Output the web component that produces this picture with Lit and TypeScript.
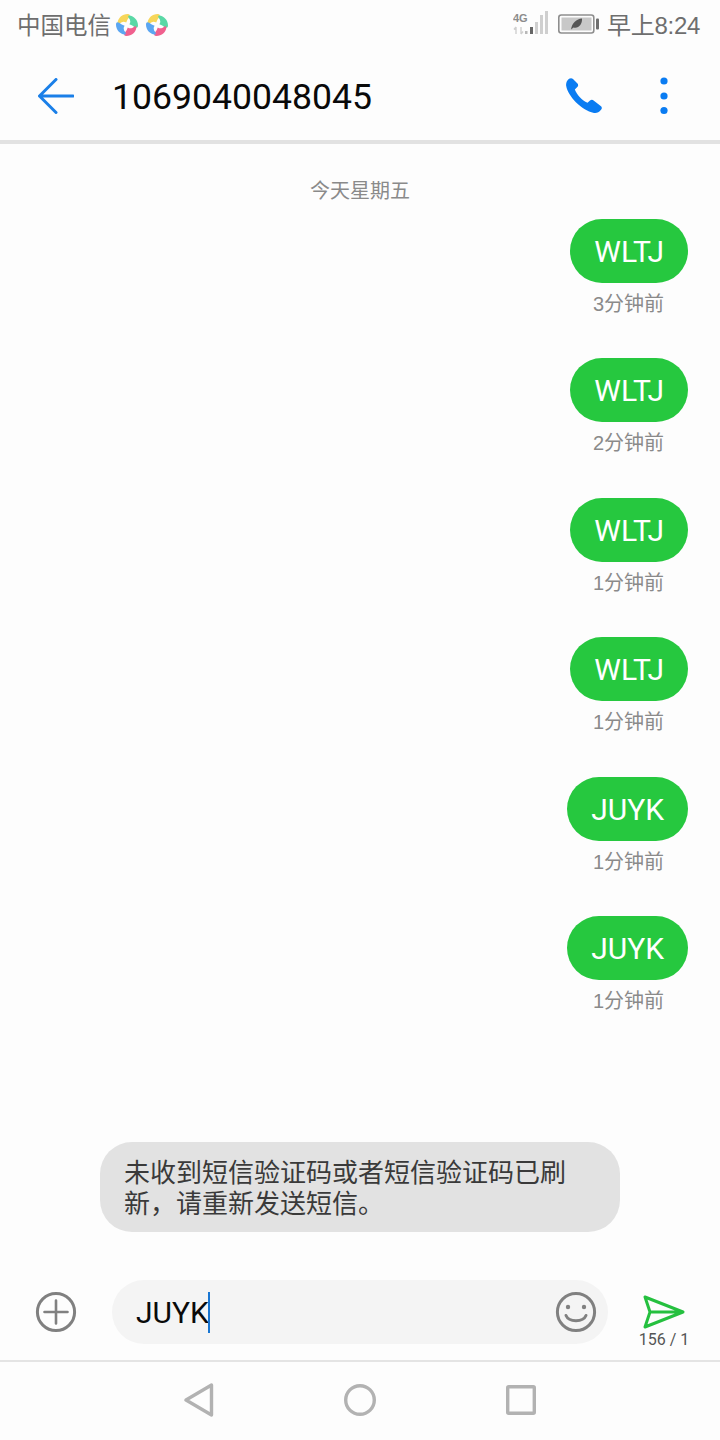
import { LitElement, html, css, svg } from "lit";
import { customElement } from "lit/decorators.js";

const msgs = [
  ["WLTJ", "3分钟前"],
  ["WLTJ", "2分钟前"],
  ["WLTJ", "1分钟前"],
  ["WLTJ", "1分钟前"],
  ["JUYK", "1分钟前"],
  ["JUYK", "1分钟前"],
];

const petal = "M2.6 9.8 C3 5 7.2 1 12.6 1 C15 1 15.4 2.8 14.2 4.2 C12.8 5.8 11.8 7.6 11.2 9.6 C9.4 8.2 7 8.4 5 10.2 C3.8 11.2 2.5 11 2.6 9.8Z";
const appIcon = svg`<svg class="appicon" width="24" height="24" viewBox="0 0 24 24">
  <path d=${petal} fill="#f7d65a"/>
  <path d=${petal} fill="#5ad8a6" transform="rotate(90 12 12)"/>
  <path d=${petal} fill="#f0608e" transform="rotate(180 12 12)"/>
  <path d=${petal} fill="#5ba6f2" transform="rotate(270 12 12)"/>
</svg>`;

@customElement("app-root")
export class AppRoot extends LitElement {
  static styles = css`
    :host {
      display: block;
      width: 720px;
      height: 1440px;
      background: #fdfdfd;
      font-family: "Liberation Sans", "Noto Sans CJK SC", sans-serif;
      overflow: hidden;
    }
    .page {
      display: flex;
      flex-direction: column;
      height: 1440px;
    }
    .status {
      height: 50px;
      display: flex;
      align-items: center;
      justify-content: space-between;
      padding: 0 20px 0 17px;
      color: #6e6e6e;
      flex: none;
    }
    .status-left, .status-right {
      display: flex;
      align-items: center;
    }
    .appicon { margin-left: 6px; }
    .carrier { font-size: 23.5px; margin-right: -2px; margin-bottom: 3px; }
    .clock { margin-left: 8px; font-size: 24px; letter-spacing: -0.3px; margin-bottom: 3px; }
    .signal { margin-bottom: 4px; }
    .batt { margin-left: 10px; margin-bottom: 2px; }
    .header {
      height: 88px;
      flex: none;
      display: flex;
      align-items: center;
      padding: 2px 52px 0 38px;
      border-bottom: 4px solid #e2e2e2;
    }
    .number {
      margin-left: 38px;
      padding-top: 2px;
      font-size: 35.6px;
      color: #0a0a0a;
      flex: 1;
      font-family: "Roboto", sans-serif;
    }
    .more { margin-left: 58px; }
    .thread {
      flex: 1;
      display: flex;
      flex-direction: column;
      min-height: 0;
    }
    .date {
      text-align: center;
      font-size: 20px;
      line-height: 24px;
      color: #8a8a8a;
      margin-top: 35px;
      margin-bottom: 16px;
    }
    .msgs {
      display: flex;
      flex-direction: column;
      align-items: flex-end;
      padding-right: 32px;
      gap: 44.4px;
    }
    .msg {
      display: flex;
      flex-direction: column;
      align-items: flex-end;
      height: 95px;
    }
    .bubble {
      height: 64px;
      line-height: 66px;
      border-radius: 32px;
      background: #26c83f;
      color: #fff;
      padding: 0 24px;
      font-size: 30px;
      font-family: "Roboto", sans-serif;
    }
    .time {
      margin-top: 8px;
      margin-right: 24px;
      font-size: 20px;
      line-height: 26px;
      color: #8a8a8a;
      white-space: nowrap;
    }
    .toast-wrap {
      margin-top: auto;
      display: flex;
      justify-content: center;
      margin-bottom: 48px;
    }
    .toast {
      width: 520px;
      height: 90px;
      box-sizing: border-box;
      border-radius: 32px;
      background: #e2e2e2;
      color: #3a3a3a;
      padding: 16px 24px;
      font-size: 26px;
      line-height: 31px;
    }
    .composer {
      flex: none;
      height: 82px;
      display: flex;
      align-items: flex-start;
      padding-left: 35px;
      border-bottom: 2px solid #e4e4e4;
      box-sizing: border-box;
    }
    .plus { margin-top: 11px; margin-right: 35px; flex: none; }
    .field {
      width: 496px;
      height: 64px;
      border-radius: 32px;
      background: #f4f4f4;
      display: flex;
      align-items: center;
      padding: 0 11px 0 24px;
      box-sizing: border-box;
      flex: none;
    }
    .input {
      flex: 1;
      display: flex;
      align-items: center;
      font-size: 30px;
      color: #0a0a0a;
      font-family: "Roboto", sans-serif;
    }
    .caret {
      display: inline-block;
      width: 2px;
      height: 41px;
      margin-left: -1px;
      background: #1976d2;
    }
    .send {
      flex: none;
      margin-left: 31px;
      width: 50px;
      display: flex;
      flex-direction: column;
      align-items: center;
    }
    .send svg { margin-top: 15px; }
    .count {
      font-size: 16px;
      line-height: 18px;
      margin-top: 2px;
      color: #555;
      white-space: nowrap;
      font-family: "Roboto", sans-serif;
    }
    .nav {
      flex: none;
      height: 78px;
      box-sizing: border-box;
      padding-bottom: 2px;
      display: flex;
      align-items: center;
      justify-content: center;
      gap: 130px;
    }
  `;

  render() {
    return html`<div class="page">
      <div class="status">
        <div class="status-left">
          <span class="carrier">中国电信</span>${appIcon}${appIcon}
        </div>
        <div class="status-right">
          <svg class="signal" width="35" height="24" viewBox="0 0 35 24">
            <text x="0" y="11" font-size="11" font-weight="700" fill="#8c8c8c" font-family="Liberation Sans">4G</text>
            <path d="M3 16v7M1 18.5l2-2.5M8 16v7M10 20.5l-2 2.5" stroke="#cfcfcf" stroke-width="1.4" fill="none"/>
            <rect x="12" y="20" width="2.5" height="3" fill="#b8b8b8"/>
            <rect x="17" y="16" width="3" height="7" fill="#666"/>
            <rect x="22" y="11" width="3" height="12" fill="#cfcfcf"/>
            <rect x="27" y="4" width="3" height="19" fill="#cfcfcf"/>
            <rect x="32" y="0" width="3" height="23" fill="#cfcfcf"/>
          </svg>
          <svg class="batt" width="41" height="20" viewBox="0 0 41 20">
            <rect x="0.8" y="1" width="35" height="18" rx="2.5" fill="none" stroke="#8e8e8e" stroke-width="1.6"/>
            <rect x="3.5" y="3.5" width="30" height="13" fill="#c8c8c8"/>
            <rect x="38" y="4.5" width="3" height="11" rx="1" fill="#6e6e6e"/>
            <path d="M13 15.5 C14 9 18.5 5 24 4.5 C24.5 10 20.5 15 15.5 13.5 L13 15.5Z" fill="#555"/>
          </svg>
          <span class="clock">早上8:24</span>
        </div>
      </div>
      <div class="header">
        <svg width="36" height="36" viewBox="0 0 36 36" fill="none" stroke="#1a7fe8" stroke-width="3" stroke-linecap="round" stroke-linejoin="round">
          <path d="M18 1.5 L1.5 18 L18 34.5 M1.5 18 H35"/>
        </svg>
        <div class="number">1069040048045</div>
        <svg width="36" height="36" viewBox="0 0 36 36">
          <path d="M3 .8 C4.5 -.2 6 0 7 1 L11.5 5.5 C12.5 6.8 12.3 8 11.3 9 L8.8 11.6 C11 17 16 22.5 21.5 24.8 L24 22.6 C25.2 21.6 26.5 21.6 27.6 22.5 L35 28.2 C36.2 29.3 36 30.8 35 31.8 C33 34.5 30.5 35.5 28 35 C15 32 2 18 .2 8 C-.3 5 1 2.4 3 .8Z" fill="#0a7cf2"/>
        </svg>
        <svg class="more" width="8" height="38" viewBox="0 0 8 38" fill="#0a7cf2">
          <circle cx="4" cy="4" r="3.6"/><circle cx="4" cy="19" r="3.6"/><circle cx="4" cy="33.5" r="3.6"/>
        </svg>
      </div>
      <div class="thread">
        <div class="date">今天星期五</div>
        <div class="msgs">
          ${msgs.map(
            ([t, w]) => html`<div class="msg">
              <div class="bubble">${t}</div>
              <div class="time">${w}</div>
            </div>`
          )}
        </div>
        <div class="toast-wrap">
          <div class="toast">未收到短信验证码或者短信验证码已刷新，请重新发送短信。</div>
        </div>
      </div>
      <div class="composer">
        <svg class="plus" width="42" height="42" viewBox="0 0 42 42" fill="none" stroke="#808080">
          <circle cx="21" cy="21" r="18.6" stroke-width="3"/>
          <path d="M21 9.5 V32.5 M9.5 21 H32.5" stroke-width="2.6" stroke-linecap="round"/>
        </svg>
        <div class="field">
          <div class="input">JUYK<span class="caret"></span></div>
          <svg width="42" height="42" viewBox="0 0 42 42" fill="none" stroke="#808080">
            <circle cx="21" cy="21" r="18.6" stroke-width="3"/>
            <circle cx="13" cy="16" r="2.2" fill="#808080" stroke="none"/>
            <circle cx="29" cy="16" r="2.2" fill="#808080" stroke="none"/>
            <path d="M11 24.5 C14 31.5 28 31.5 31 24.5" stroke-width="3" stroke-linecap="round"/>
          </svg>
        </div>
        <div class="send">
          <svg width="42" height="34" viewBox="0 0 42 34" fill="none" stroke="#25c03f" stroke-width="3" stroke-linejoin="round" stroke-linecap="round">
            <path d="M2 2 L40 17 L2 32 L7 17 Z M7 17 H40"/>
          </svg>
          <div class="count">156 / 1</div>
        </div>
      </div>
      <div class="nav">
        <svg width="30" height="34" viewBox="0 0 30 34" fill="none" stroke="#b2b2b2" stroke-width="3.4" stroke-linejoin="round">
          <path d="M27.5 2 V32 L2 17 Z"/>
        </svg>
        <svg width="32" height="32" viewBox="0 0 32 32" fill="none" stroke="#b2b2b2" stroke-width="3.4">
          <circle cx="16" cy="16" r="14.3"/>
        </svg>
        <svg width="30" height="30" viewBox="0 0 30 30" fill="none" stroke="#b2b2b2" stroke-width="3.4" stroke-linejoin="round">
          <rect x="1.7" y="1.7" width="26.6" height="26.6" rx="1"/>
        </svg>
      </div>
    </div>`;
  }
}
